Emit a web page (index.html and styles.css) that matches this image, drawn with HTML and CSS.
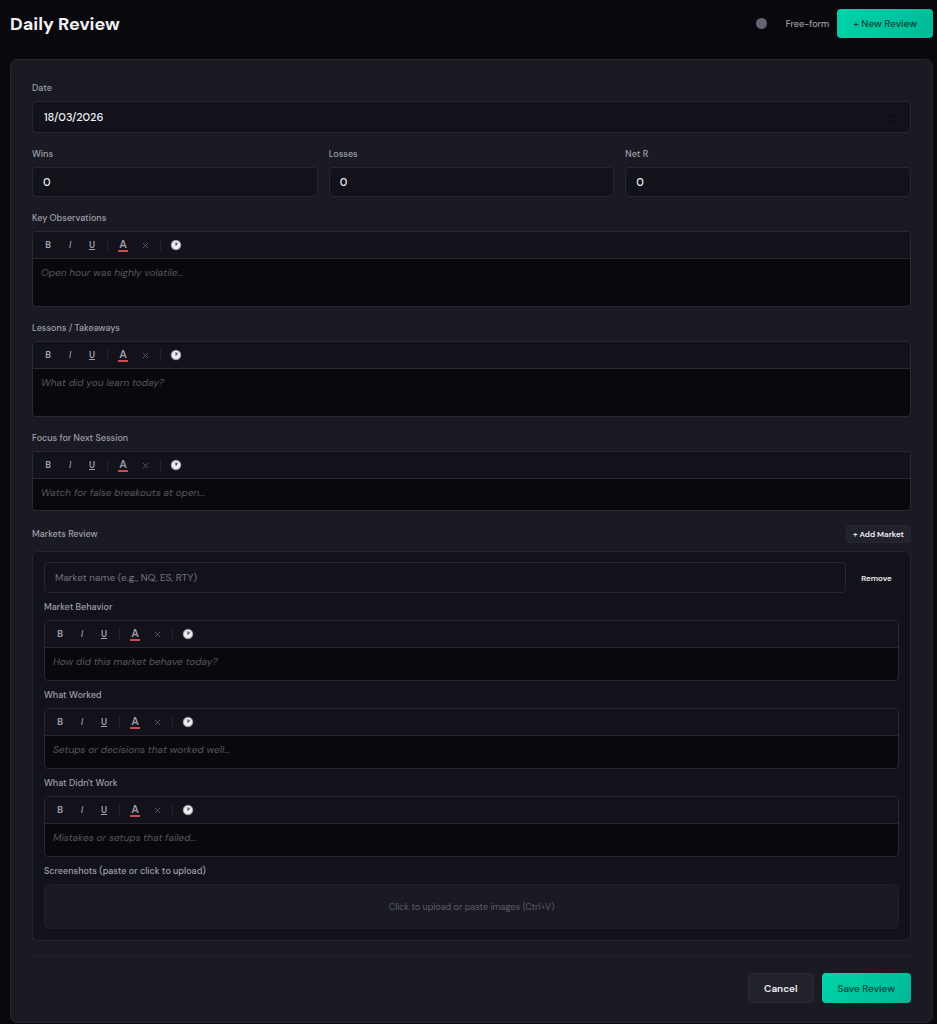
FILE: index.html
```html
<!DOCTYPE html>
<html lang="en">
<head>
<meta charset="utf-8">
<meta name="viewport" content="width=device-width, initial-scale=1">
<title>Daily Review</title>
<link rel="stylesheet" href="styles.css">
</head>
<body>
<svg class="sprite" aria-hidden="true">
  <symbol id="clock" viewBox="0 0 12 12">
    <circle cx="6" cy="6" r="5.3" fill="#8e8e95"/>
    <circle cx="6" cy="6" r="4.3" fill="#ececf0"/>
    <path d="M6 6.4V3.2M6 6.4L7.6 3.9" fill="none" stroke="#3b3b44" stroke-width="1"/>
  </symbol>
  <symbol id="cross" viewBox="0 0 8 8">
    <path d="M1 1l6 6M7 1L1 7" fill="none" stroke="currentColor" stroke-width="1"/>
  </symbol>
</svg>
<header class="page-header">
  <h1>Daily Review</h1>
  <div class="header-actions">
    <label class="mode"><input class="mode-dot" type="checkbox">Free-form</label>
    <button class="btn btn-primary" type="button">+ New Review</button>
  </div>
</header>
<main>
  <form class="card">
    <div class="field">
      <label for="date">Date</label>
      <div class="date-box">
        <input class="input date-input" id="date" type="text" value="18/03/2026">
        <button class="date-picker" type="button" aria-label="Pick a date">
          <svg viewBox="0 0 10 10"><path d="M1 2h8v7H1zM1 4h8M3 1v2M7 1v2" fill="none" stroke="currentColor"/></svg>
        </button>
      </div>
    </div>
    <div class="stats">
      <div class="field"><label for="wins">Wins</label><input class="input" id="wins" type="number" value="0"></div>
      <div class="field"><label for="losses">Losses</label><input class="input" id="losses" type="number" value="0"></div>
      <div class="field"><label for="net">Net R</label><input class="input" id="net" type="number" value="0"></div>
    </div>
    <div class="field">
      <label for="observations">Key Observations</label>
      <div class="editor editor-tall">
        <div class="toolbar">
          <button class="tool bold" type="button">B</button><button class="tool italic" type="button">I</button><button class="tool underline" type="button">U</button>
          <span class="sep"></span>
          <button class="tool" type="button" aria-label="Text color"><span class="color">A</span></button><button class="tool clear" type="button" aria-label="Clear color"><svg class="cross"><use href="#cross"/></svg></button>
          <span class="sep"></span>
          <button class="tool" type="button" aria-label="Insert time"><svg class="clock"><use href="#clock"/></svg></button>
        </div>
        <textarea id="observations" placeholder="Open hour was highly volatile..."></textarea>
      </div>
    </div>
    <div class="field">
      <label for="lessons">Lessons / Takeaways</label>
      <div class="editor editor-tall">
        <div class="toolbar">
          <button class="tool bold" type="button">B</button><button class="tool italic" type="button">I</button><button class="tool underline" type="button">U</button>
          <span class="sep"></span>
          <button class="tool" type="button" aria-label="Text color"><span class="color">A</span></button><button class="tool clear" type="button" aria-label="Clear color"><svg class="cross"><use href="#cross"/></svg></button>
          <span class="sep"></span>
          <button class="tool" type="button" aria-label="Insert time"><svg class="clock"><use href="#clock"/></svg></button>
        </div>
        <textarea id="lessons" placeholder="What did you learn today?"></textarea>
      </div>
    </div>
    <div class="field">
      <label for="focus">Focus for Next Session</label>
      <div class="editor">
        <div class="toolbar">
          <button class="tool bold" type="button">B</button><button class="tool italic" type="button">I</button><button class="tool underline" type="button">U</button>
          <span class="sep"></span>
          <button class="tool" type="button" aria-label="Text color"><span class="color">A</span></button><button class="tool clear" type="button" aria-label="Clear color"><svg class="cross"><use href="#cross"/></svg></button>
          <span class="sep"></span>
          <button class="tool" type="button" aria-label="Insert time"><svg class="clock"><use href="#clock"/></svg></button>
        </div>
        <textarea id="focus" placeholder="Watch for false breakouts at open..."></textarea>
      </div>
    </div>
    <section class="markets">
      <div class="markets-head">
        <h2>Markets Review</h2>
        <button class="btn-small" type="button">+ Add Market</button>
      </div>
      <div class="market">
        <div class="market-name">
          <input class="input" type="text" aria-label="Market name" placeholder="Market name (e.g., NQ, ES, RTY)">
          <button class="btn-remove" type="button">Remove</button>
        </div>
        <div class="field">
          <label for="behavior">Market Behavior</label>
          <div class="editor">
            <div class="toolbar">
              <button class="tool bold" type="button">B</button><button class="tool italic" type="button">I</button><button class="tool underline" type="button">U</button>
              <span class="sep"></span>
              <button class="tool" type="button" aria-label="Text color"><span class="color">A</span></button><button class="tool clear" type="button" aria-label="Clear color"><svg class="cross"><use href="#cross"/></svg></button>
              <span class="sep"></span>
              <button class="tool" type="button" aria-label="Insert time"><svg class="clock"><use href="#clock"/></svg></button>
            </div>
            <textarea id="behavior" placeholder="How did this market behave today?"></textarea>
          </div>
        </div>
        <div class="field">
          <label for="worked">What Worked</label>
          <div class="editor">
            <div class="toolbar">
              <button class="tool bold" type="button">B</button><button class="tool italic" type="button">I</button><button class="tool underline" type="button">U</button>
              <span class="sep"></span>
              <button class="tool" type="button" aria-label="Text color"><span class="color">A</span></button><button class="tool clear" type="button" aria-label="Clear color"><svg class="cross"><use href="#cross"/></svg></button>
              <span class="sep"></span>
              <button class="tool" type="button" aria-label="Insert time"><svg class="clock"><use href="#clock"/></svg></button>
            </div>
            <textarea id="worked" placeholder="Setups or decisions that worked well..."></textarea>
          </div>
        </div>
        <div class="field">
          <label for="failed">What Didn't Work</label>
          <div class="editor">
            <div class="toolbar">
              <button class="tool bold" type="button">B</button><button class="tool italic" type="button">I</button><button class="tool underline" type="button">U</button>
              <span class="sep"></span>
              <button class="tool" type="button" aria-label="Text color"><span class="color">A</span></button><button class="tool clear" type="button" aria-label="Clear color"><svg class="cross"><use href="#cross"/></svg></button>
              <span class="sep"></span>
              <button class="tool" type="button" aria-label="Insert time"><svg class="clock"><use href="#clock"/></svg></button>
            </div>
            <textarea id="failed" placeholder="Mistakes or setups that failed..."></textarea>
          </div>
        </div>
        <div class="field">
          <label for="upload">Screenshots (paste or click to upload)</label>
          <button class="upload" id="upload" type="button">Click to upload or paste images (Ctrl+V)</button>
        </div>
      </div>
    </section>
    <footer class="form-footer">
      <button class="btn btn-secondary" type="button">Cancel</button>
      <button class="btn btn-primary" type="submit">Save Review</button>
    </footer>
  </form>
</main>
</body>
</html>
```
FILE: styles.css
```css
* { box-sizing: border-box; }
body {
  margin: 0;
  padding: 9px 4px 1px 10px;
  background: #09090d;
  color: #f0f0f5;
  font-family: "DM Sans", Inter, "Liberation Sans", sans-serif;
  font-size: 10px;
}
button, input, textarea { font: inherit; color: inherit; margin: 0; }
button { cursor: pointer; padding: 0; }
.sprite { display: none; }
.page-header {
  display: flex;
  align-items: center;
  justify-content: space-between;
  margin-bottom: 21px;
}
h1 { margin: 0; font-size: 18px; line-height: 28px; font-weight: 700; }
.header-actions { display: flex; align-items: center; gap: 8px; }
.mode { display: flex; align-items: center; gap: 19px; font-size: 9px; font-weight: 500; color: #a0a0ac; }
.mode-dot {
  appearance: none;
  width: 11px;
  height: 11px;
  border-radius: 50%;
  background: #666472;
}
.btn {
  height: 30px;
  padding: 0 15px;
  border: 1px solid transparent;
  border-radius: 4px;
  font-weight: 500;
}
.btn-primary {
  padding: 0 16px;
  border: 0;
  background: linear-gradient(135deg, #00d4aa, #00b894);
  color: #073f38;
}
.page-header .btn { height: 29px; }
.btn-secondary { background: #22222d; border-color: #2a2a35; font-weight: 600; }
.card {
  display: flex;
  flex-direction: column;
  gap: 14px;
  padding: 21px 21px 19px;
  border: 1px solid #25262c;
  border-radius: 7px;
  background: #1a1a23;
}
.field { display: flex; flex-direction: column; gap: 6px; min-width: 0; }
.field label, h2 {
  margin: 0;
  font-size: 9px;
  line-height: 14px;
  font-weight: 500;
  color: #a0a0ac;
}
.input {
  width: 100%;
  height: 30px;
  padding: 0 10px;
  border: 1px solid #272730;
  border-radius: 4px;
  background: #12121a;
  font-size: 11px;
  font-weight: 500;
  outline: none;
}
.input::placeholder { color: #75757e; opacity: 1; font-weight: 400; }
input[type="number"] { appearance: textfield; }
input[type="number"]::-webkit-inner-spin-button { appearance: none; margin: 0; }
.date-box { position: relative; display: flex; }
.date-input { height: 32px; padding: 0 11px; }
.date-picker {
  position: absolute;
  right: 14px;
  top: 11px;
  width: 10px;
  height: 10px;
  border: 0;
  background: none;
  color: #0d0d13;
}
.date-picker svg { display: block; }
.stats { display: grid; grid-template-columns: repeat(3, 1fr); gap: 11px; }
.editor {
  display: flex;
  flex-direction: column;
  height: 60px;
  border: 1px solid #292930;
  border-radius: 4px;
  background: #09090d;
  overflow: hidden;
}
.editor-tall { height: 76px; }
.market .editor { height: 61px; }
.toolbar {
  display: flex;
  align-items: center;
  gap: 2px;
  flex: none;
  height: 27px;
  padding: 0 5px;
  border-bottom: 1px solid #292930;
  background: #12121a;
}
.tool {
  display: flex;
  align-items: center;
  justify-content: center;
  width: 20px;
  height: 20px;
  border: 0;
  background: none;
  color: #a0a0ac;
  font-size: 9px;
}
.bold { font-weight: 700; }
.italic { font-style: italic; font-weight: 500; }
.underline { text-decoration: underline; font-weight: 600; }
.color {
  width: 10px;
  border-bottom: 2px solid #cf4a50;
  font-size: 11px;
  line-height: 11px;
  font-weight: 600;
}
.clear { color: #5d5d68; }
.cross { width: 7px; height: 7px; }
.clock { width: 12px; height: 12px; }
.sep { width: 1px; height: 12px; margin: 0 3px; background: #23232c; }
textarea {
  flex: 1;
  width: 100%;
  min-height: 0;
  padding: 7px 8px;
  border: 0;
  background: none;
  line-height: 14px;
  resize: none;
  outline: none;
}
textarea::placeholder { color: #57575f; opacity: 1; font-style: italic; }
.markets { display: flex; flex-direction: column; gap: 8px; }
.markets-head { display: flex; align-items: center; justify-content: space-between; }
.btn-small {
  height: 18px;
  padding: 0 6px;
  border: 1px solid #272731;
  border-radius: 3px;
  background: #22222d;
  font-size: 8px;
  font-weight: 600;
}
.market {
  display: flex;
  flex-direction: column;
  gap: 7px;
  padding: 10px 11px 11px;
  border: 1px solid #26262f;
  border-radius: 6px;
  background: #12121a;
}
.market-name { display: flex; align-items: center; gap: 8px; }
.market-name .input { flex: 1; min-width: 0; height: 31px; font-size: 10px; }
.btn-remove {
  width: 45px;
  height: 18px;
  border: 0;
  background: none;
  font-size: 8px;
  font-weight: 600;
}
.upload {
  width: 100%;
  height: 45px;
  border: 1px solid #1f1f28;
  border-radius: 6px;
  background: #1a1a23;
  color: #5b5b66;
  font-size: 9px;
}
.form-footer {
  display: flex;
  justify-content: flex-end;
  gap: 8px;
  padding-top: 17px;
  border-top: 1px solid #22222b;
}
```
